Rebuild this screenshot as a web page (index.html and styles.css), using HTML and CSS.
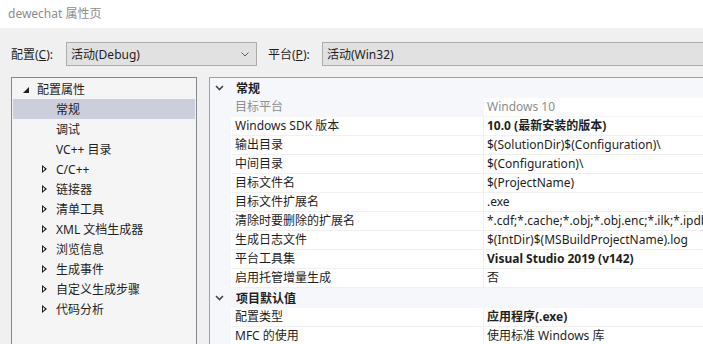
FILE: index.html
```html
<!DOCTYPE html>
<html lang="zh-CN">

<head>
    <meta charset="UTF-8">
    <title>dewechat 属性页</title>
    <link rel="stylesheet" href="styles.css">
</head>

<body>
    <div class="titlebar">dewechat 属性页</div>

    <div class="dialog">
        <!-- 配置 / 平台 -->
        <div class="config_row">
            <span class="config_label">配置(<u>C</u>):</span>
            <div class="combo combo_config">
                <span>活动(Debug)</span>
                <svg class="combo_arrow" width="8" height="5" viewBox="0 0 8 5">
                    <polyline points="0.5,0.5 4,4 7.5,0.5" fill="none" stroke="#606060" stroke-width="1"/>
                </svg>
            </div>
            <span class="config_label platform_label">平台(<u>P</u>):</span>
            <div class="combo combo_platform">
                <span>活动(Win32)</span>
            </div>
        </div>

        <div class="panels">
            <!-- 왼쪽 트리 -->
            <div class="tree">
                <div class="tree_item level0">
                    <svg class="tri" width="6" height="6" viewBox="0 0 6 6">
                        <polygon points="6,0 6,6 0,6" fill="#1e1e1e"/>
                    </svg>
                    配置属性
                </div>
                <div class="tree_item level1 selected">常规</div>
                <div class="tree_item level1">调试</div>
                <div class="tree_item level1">VC++ 目录</div>
                <div class="tree_item level1 has_child">C/C++</div>
                <div class="tree_item level1 has_child">链接器</div>
                <div class="tree_item level1 has_child">清单工具</div>
                <div class="tree_item level1 has_child">XML 文档生成器</div>
                <div class="tree_item level1 has_child">浏览信息</div>
                <div class="tree_item level1 has_child">生成事件</div>
                <div class="tree_item level1 has_child">自定义生成步骤</div>
                <div class="tree_item level1 has_child">代码分析</div>
            </div>

            <!-- 속성 그리드 -->
            <div class="grid">
                <div class="group">
                    <svg class="chev" width="9" height="6" viewBox="0 0 9 6">
                        <polyline points="1,1 4.5,4.5 8,1" fill="none" stroke="#444" stroke-width="1.6"/>
                    </svg>
                    <span>常规</span>
                </div>
                <div class="prop readonly"><div class="name">目标平台</div><div class="value">Windows 10</div></div>
                <div class="prop"><div class="name">Windows SDK 版本</div><div class="value bold">10.0 (最新安装的版本)</div></div>
                <div class="prop"><div class="name">输出目录</div><div class="value">$(SolutionDir)$(Configuration)\</div></div>
                <div class="prop"><div class="name">中间目录</div><div class="value">$(Configuration)\</div></div>
                <div class="prop"><div class="name">目标文件名</div><div class="value">$(ProjectName)</div></div>
                <div class="prop"><div class="name">目标文件扩展名</div><div class="value">.exe</div></div>
                <div class="prop"><div class="name">清除时要删除的扩展名</div><div class="value">*.cdf;*.cache;*.obj;*.obj.enc;*.ilk;*.ipdb;*.iobj;*.resources;*.tlb</div></div>
                <div class="prop"><div class="name">生成日志文件</div><div class="value">$(IntDir)$(MSBuildProjectName).log</div></div>
                <div class="prop"><div class="name">平台工具集</div><div class="value bold">Visual Studio 2019 (v142)</div></div>
                <div class="prop"><div class="name">启用托管增量生成</div><div class="value">否</div></div>
                <div class="group">
                    <svg class="chev" width="9" height="6" viewBox="0 0 9 6">
                        <polyline points="1,1 4.5,4.5 8,1" fill="none" stroke="#444" stroke-width="1.6"/>
                    </svg>
                    <span>项目默认值</span>
                </div>
                <div class="prop"><div class="name">配置类型</div><div class="value bold">应用程序(.exe)</div></div>
                <div class="prop"><div class="name">MFC 的使用</div><div class="value">使用标准 Windows 库</div></div>
            </div>
        </div>
    </div>
</body>

</html>
```

FILE: styles.css
```css
/* 기본 설정 */
* {
    box-sizing: border-box;
    margin: 0;
    padding: 0;
}

html,
body {
    width: 703px;
    height: 344px;
    overflow: hidden;
    background-color: #f0f0f0;
    color: #1e1e1e;
    font-family: "Noto Sans", "Noto Sans CJK SC", sans-serif;
    font-size: 12px;
}

/* 타이틀바 */
.titlebar {
    height: 28px;
    line-height: 27px;
    padding-left: 8px;
    background-color: #ffffff;
    color: #8c8c8c;
}

.dialog {
    padding: 14px 0 0 11px;
}

/* 구성 행 */
.config_row {
    display: flex;
    align-items: center;
    height: 24px;
}

.config_label {
    width: 55px;
    color: #1e1e1e;
}

.config_label u {
    text-decoration: underline;
    text-underline-offset: 1px;
}

.platform_label {
    margin-left: 11px;
    width: 54px;
}

.combo {
    display: flex;
    align-items: center;
    justify-content: space-between;
    height: 24px;
    padding: 0 6px 0 4px;
    background-color: #e1e1e1;
    border: 1px solid #adadad;
}

.combo_config {
    width: 191px;
}

.combo_platform {
    flex: 1;
    border-right: none;
}

.combo_arrow {
    margin-right: 1px;
}

/* 패널 */
.panels {
    display: flex;
    gap: 12px;
    margin-top: 11px;
    height: 267px;
    overflow: hidden;
}

.tree {
    width: 186px;
    background-color: #f5f5f5;
    border: 1px solid #828790;
    border-bottom: none;
    padding: 1px 1px 0 1px;
}

.tree_item {
    position: relative;
    display: flex;
    align-items: center;
    height: 20px;
    white-space: nowrap;
}

.level0 {
    padding-left: 24px;
}

.level0 .tri {
    position: absolute;
    left: 10px;
    top: 8px;
}

.level1 {
    padding-left: 43px;
}

.selected {
    background-color: #cccedb;
}

.has_child::before {
    content: "";
    position: absolute;
    left: 29px;
    top: 6px;
    width: 0;
    height: 0;
    border-top: 4px solid transparent;
    border-bottom: 4px solid transparent;
    border-left: 5px solid #1e1e1e;
}

.has_child::after {
    content: "";
    position: absolute;
    left: 30px;
    top: 8px;
    width: 0;
    height: 0;
    border-top: 2px solid transparent;
    border-bottom: 2px solid transparent;
    border-left: 2.5px solid #f5f5f5;
}

/* 속성 그리드 */
.grid {
    flex: 1;
    background-color: #f5f7fa;
    border: 1px solid #a0a0a0;
    border-right: none;
    border-bottom: none;
    overflow: hidden;
}

.group {
    display: flex;
    align-items: center;
    height: 20px;
    font-weight: 700;
}

.group .chev {
    margin-left: 5px;
    margin-right: 12px;
}

.prop {
    display: flex;
    height: 19px;
    margin-left: 21px;
    border-bottom: 1px solid #f0f0f0;
    background-color: #ffffff;
}

.prop .name {
    width: 253px;
    flex-shrink: 0;
    padding-left: 4px;
    line-height: 18px;
    border-right: 1px solid #f0f0f0;
    white-space: nowrap;
}

.prop .value {
    padding-left: 3px;
    line-height: 18px;
    white-space: nowrap;
}

.bold {
    font-weight: 700;
}

.readonly {
    background-color: #f5f7fa;
    border-bottom-color: #f5f7fa;
}

.readonly .name {
    color: #8d8d8d;
    border-right: none;
}

.readonly .value {
    flex: 1;
    background-color: #ffffff;
    color: #8d8d8d;
}
```
